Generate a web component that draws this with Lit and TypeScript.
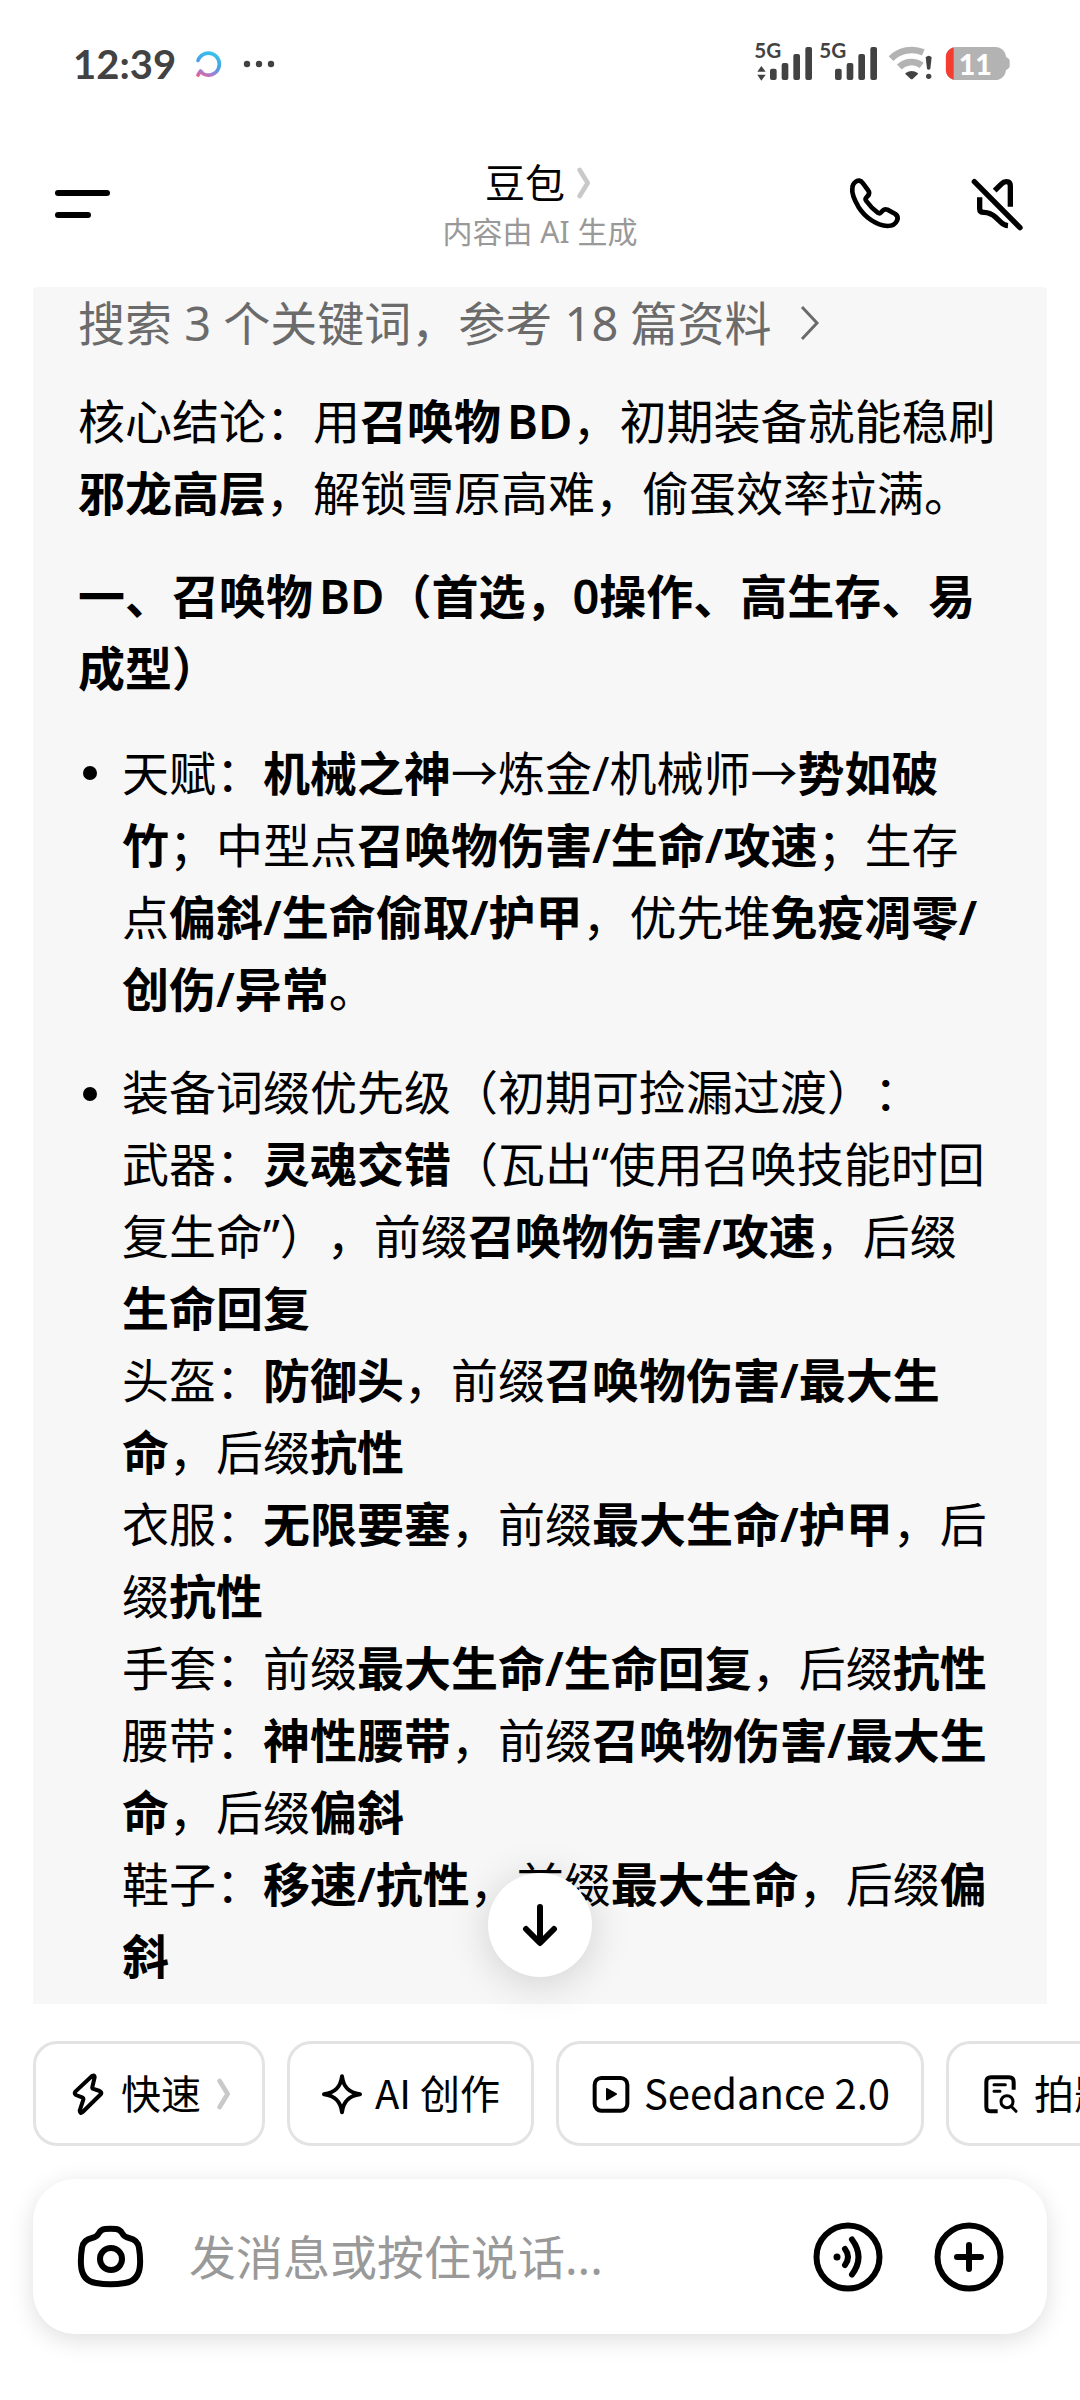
import { LitElement, html, css, svg } from "lit";
import { customElement } from "lit/decorators.js";

const signalBars = (x: number) => svg`
  <rect x=${x} y="116" width="20" height="34" rx="6" />
  <rect x=${x + 35} y="99" width="20" height="51" rx="6" />
  <rect x=${x + 70} y="72" width="20" height="78" rx="6" />
  <rect x=${x + 106} y="51" width="20" height="99" rx="6" />`;

@customElement("status-bar")
class StatusBar extends LitElement {
  static styles = css`
    :host {
      display: flex;
      align-items: center;
      height: 128px;
      padding: 0 69px 0 73px;
      color: #424242;
      font-family: Lato, "Noto Sans", sans-serif;
    }
    .time {
      font-size: 40px;
      line-height: 48px;
      font-weight: 700;
    }
    .app {
      margin-left: 17px;
    }
    .more {
      margin-left: 20px;
    }
    .signals {
      display: flex;
      gap: 6px;
      margin-left: auto;
    }
    .dark {
      fill: #424242;
    }
    .net {
      font-size: 62px;
      font-weight: 700;
    }
    .level {
      font-size: 86px;
      font-weight: 900;
      fill: #fff;
    }
  `;

  render() {
    return html`
      <span class="time">12:39</span>
      <svg class="app" width="30" height="30" viewBox="0 0 30 30" fill="none" aria-hidden="true">
        <defs>
          <linearGradient id="ring" x1="20" y1="0" x2="8" y2="30" gradientUnits="userSpaceOnUse">
            <stop offset="0.1" stop-color="#35c3ea" />
            <stop offset="0.5" stop-color="#4aa0e6" />
            <stop offset="0.75" stop-color="#a77fd0" />
            <stop offset="0.95" stop-color="#f0568f" />
          </linearGradient>
        </defs>
        <path d="M5 11.500A11 11 0 1 1 10.500 25L7.500 22L5 26" stroke="url(#ring)" stroke-width="3.600" stroke-linecap="round" stroke-linejoin="round" />
      </svg>
      <svg class="more dark" width="32" height="8" viewBox="0 0 32 8" aria-hidden="true">
        <circle cx="4" cy="4" r="3.200" /><circle cx="16" cy="4" r="3.200" /><circle cx="28" cy="4" r="3.200" />
      </svg>
      <div class="signals">
        <svg class="dark" width="59" height="64" viewBox="42 6 177 192">
          <text class="net" x="43" y="83">5G</text>
          ${signalBars(90)}
          <path d="M52 125L64 108L77 125ZM52 134H77L64 152Z" />
        </svg>
        <svg class="dark" width="59" height="64" viewBox="237 6 177 192">
          <text class="net" x="238" y="83">5G</text>
          ${signalBars(285)}
        </svg>
        <svg width="49" height="64" viewBox="432 6 147 192" fill="none" aria-hidden="true">
          <path d="M453 86A88 88 0 0 1 550 67M478 111A52 52 0 0 1 545 106" stroke="#b3b3b3" stroke-width="20" />
          <path class="dark" d="M497 129Q515 117 533 129Q535 131 533 133L518 147Q515 149 512 147L497 133Q495 131 497 129Z" />
          <path class="dark" d="M557 82Q566 72 575 82L571 116Q566 122 561 116Z" />
          <circle class="dark" cx="566" cy="139" r="8" />
        </svg>
        <svg width="72" height="64" viewBox="597 6 216 192">
          <clipPath id="cell"><rect x="617" y="51" width="181" height="99" rx="32" /></clipPath>
          <path d="M790 78Q809 84 809 92V109Q809 117 790 123Z" fill="#b3b3b3" />
          <g clip-path="url(#cell)">
            <rect x="617" y="51" width="181" height="99" fill="#b3b3b3" />
            <rect x="617" y="51" width="24" height="99" fill="#f43c30" />
          </g>
          <text class="level" x="706" y="134" text-anchor="middle">11</text>
        </svg>
      </div>
    `;
  }
}

const chevron = html`<svg width="18" height="32" viewBox="544 143 54 96" fill="none" aria-hidden="true">
  <path d="M564 152L588 191L564 230" stroke="#c9c9c9" stroke-width="14" stroke-linecap="round" stroke-linejoin="round" />
</svg>`;

@customElement("chat-header")
class ChatHeader extends LitElement {
  static styles = css`
    :host {
      display: grid;
      grid-template-columns: 1fr auto 1fr;
      align-items: center;
      height: 152px;
      padding: 0 54px;
    }
    button {
      display: flex;
      padding: 0;
      border: 0;
      background: none;
      font: inherit;
      color: #000;
      cursor: pointer;
    }
    .menu {
      justify-self: start;
    }
    .title {
      display: flex;
      flex-direction: column;
      align-items: center;
      gap: 7px;
    }
    .name {
      align-items: center;
      gap: 8px;
      padding-right: 4px;
      font-size: 40px;
      line-height: 48px;
    }
    .note {
      font-size: 30px;
      line-height: 36px;
      color: #999;
    }
    .actions {
      display: flex;
      justify-content: flex-end;
      gap: 66px;
    }
  `;

  render() {
    return html`
      <button class="menu" aria-label="菜单">
        <svg width="58" height="32" viewBox="0 0 58 32" fill="none" stroke="#000" stroke-width="6" stroke-linecap="round">
          <path d="M4 5H53M4 27H34" />
        </svg>
      </button>
      <div class="title">
        <button class="name">豆包 ${chevron}</button>
        <span class="note">内容由 AI 生成</span>
      </div>
      <div class="actions">
        <button aria-label="通话">
          <svg width="56" height="56" viewBox="23 18 168 168" fill="none" stroke="#000" stroke-width="14" stroke-linejoin="round">
            <path d="M45 36Q57 26 68 40L84 62Q90 70 82 78L77 84Q74 88 78 93Q92 113 112 128Q118 132 122 127L128 121Q133 116 141 119L165 132Q176 140 170 152Q163 168 142 168C108 166 74 142 54 110C40 86 34 68 36 54Q37 42 45 36Z" />
          </svg>
        </button>
        <button aria-label="静音">
          <svg width="56" height="56" viewBox="390 20 168 168" fill="none" stroke="#000" stroke-width="16" stroke-linejoin="round">
            <path d="M403 37L540 175" stroke-linecap="round" />
            <path d="M464 64L483 45Q494 34 505 38Q511 41 511 50V112" />
            <path d="M419 84V118Q419 129 432 129Q452 130 466 143L484 160Q492 168 504 169" />
          </svg>
        </button>
      </div>
    `;
  }
}

@customElement("chat-answer")
class ChatAnswer extends LitElement {
  static styles = css`
    :host {
      display: flex;
      flex-direction: column;
      gap: 31px;
      padding: 0 45px;
      overflow: hidden;
      border-radius: 4px 4px 0 0;
      background: #f7f7f7;
      font-size: 47px;
      line-height: 72px;
      color: #000;
    }
    .sources {
      display: flex;
      align-items: center;
      gap: 28px;
      margin-bottom: -5px;
      color: #6b6b6b;
      text-decoration: none;
    }
    p,
    h2,
    ul {
      margin: 0;
      padding: 0;
    }
    h2 {
      font-size: inherit;
    }
    h2,
    b {
      font-weight: 600;
    }
    .latin {
      margin-left: 6px;
    }
    .arrow {
      font-family: "Noto Sans CJK SC", sans-serif;
      font-weight: 400;
    }
    ul {
      display: flex;
      flex-direction: column;
      gap: 31px;
      list-style: none;
    }
    li {
      display: grid;
      grid-template-columns: 44px 1fr;
    }
    li::before {
      content: "";
      width: 14px;
      height: 14px;
      margin: 31px 0 0 5px;
      border-radius: 50%;
      background: #000;
    }
  `;

  render() {
    return html`
      <a class="sources" href="#sources">
        搜索 3 个关键词，参考 18 篇资料
        <svg width="20" height="36" viewBox="0 0 20 36" fill="none" aria-hidden="true">
          <path d="M2 2L17 18L2 34" stroke="#6b6b6b" stroke-width="3" />
        </svg>
      </a>
      <p>核心结论：用<b>召唤物<span class="latin">BD</span></b>，初期装备就能稳刷<b>邪龙高层</b>，解锁雪原高难，偷蛋效率拉满。</p>
      <h2>一、召唤物<span class="latin">BD</span>（首选，0操作、高生存、易成型）</h2>
      <ul>
        <li>
          <div>天赋：<b>机械之神</b><span class="arrow">→</span>炼金/机械师<span class="arrow">→</span><b>势如破竹</b>；中型点<b>召唤物伤害/生命/攻速</b>；生存点<b>偏斜/生命偷取/护甲</b>，优先堆<b>免疫凋零/创伤/异常</b>。</div>
        </li>
        <li>
          <div>
            装备词缀优先级（初期可捡漏过渡）：<br />
            武器：<b>灵魂交错</b>（瓦出“使用召唤技能时回复生命”），前缀<b>召唤物伤害/攻速</b>，后缀<b>生命回复</b><br />
            头盔：<b>防御头</b>，前缀<b>召唤物伤害/最大生命</b>，后缀<b>抗性</b><br />
            衣服：<b>无限要塞</b>，前缀<b>最大生命/护甲</b>，后缀<b>抗性</b><br />
            手套：前缀<b>最大生命/生命回复</b>，后缀<b>抗性</b><br />
            腰带：<b>神性腰带</b>，前缀<b>召唤物伤害/最大生命</b>，后缀<b>偏斜</b><br />
            鞋子：<b>移速/抗性</b>，前缀<b>最大生命</b>，后缀<b>偏斜</b>
          </div>
        </li>
      </ul>
    `;
  }
}

@customElement("quick-actions")
class QuickActions extends LitElement {
  static styles = css`
    :host {
      display: flex;
      gap: 22px;
      padding: 37px 0 33px 33px;
      overflow: hidden;
    }
    button {
      display: flex;
      flex: none;
      align-items: center;
      gap: 12px;
      height: 105px;
      padding: 0 31px;
      border: 3px solid #e3e3e3;
      border-radius: 24px;
      background: #fff;
      font-family: "Noto Sans CJK SC", sans-serif;
      font-size: 40px;
      color: #000;
      white-space: nowrap;
      cursor: pointer;
    }
    .label {
      padding-bottom: 4px;
    }
    .icon {
      fill: none;
      stroke: #000;
      stroke-width: 12px;
      stroke-linejoin: round;
      stroke-linecap: round;
    }
    .thin {
      stroke-width: 9px;
    }
    .solid {
      fill: #000;
      stroke-width: 6px;
    }
  `;

  render() {
    return html`
      <button>
        <svg class="icon" width="42" height="42" viewBox="111 128 126 126" aria-hidden="true">
          <path d="M186 137L136 184Q132 190 138 194L158 202Q161 204 160 208L149 241Q150 252 158 245L213 191Q216 185 209 182L188 175Q186 174 187 170L194 141Q194 132 186 137Z" />
        </svg>
        <span class="label">快速</span> ${chevron}
      </button>
      <button>
        <svg class="icon" width="42" height="42" viewBox="867 128 126 126" aria-hidden="true">
          <path d="M930 138C934 170 950 187 984 192C950 197 934 213 930 246C926 213 910 197 876 192C910 187 926 170 930 138Z" />
        </svg>
        <span class="label">AI 创作</span>
      </button>
      <button>
        <svg class="icon" width="42" height="42" viewBox="54 128 126 126" aria-hidden="true">
          <rect x="68" y="143" width="98" height="98" rx="20" />
          <path class="solid" d="M105 176L132 191L105 207Z" />
        </svg>
        <span class="label">Seedance 2.0</span>
      </button>
      <button>
        <svg class="icon" width="42" height="42" viewBox="1227 128 126 126" aria-hidden="true">
          <path d="M1280 243H1260Q1246 243 1246 229V155Q1246 141 1260 141H1314Q1328 141 1328 155V178" stroke-linecap="butt" />
          <path class="thin" d="M1269 163H1303M1269 183H1287M1322 229L1335 243" />
          <circle class="thin" cx="1308" cy="214" r="18" />
        </svg>
        <span class="label">拍题</span>
      </button>
    `;
  }
}

@customElement("chat-composer")
class ChatComposer extends LitElement {
  static styles = css`
    :host {
      display: flex;
      align-items: center;
      height: 155px;
      margin: 0 33px 66px;
      padding: 0 42px;
      box-sizing: border-box;
      border-radius: 42px;
      background: #fff;
      box-shadow: 0 6px 24px rgba(0, 0, 0, 0.13);
    }
    button {
      display: flex;
      flex: none;
      padding: 0;
      border: 0;
      background: none;
      cursor: pointer;
    }
    svg {
      fill: none;
      stroke: #000;
      stroke-width: 6px;
      stroke-linecap: round;
      stroke-linejoin: round;
    }
    .dot {
      fill: #000;
      stroke: none;
    }
    input {
      flex: 1;
      min-width: 0;
      margin: 0 42px;
      padding: 0;
      border: 0;
      outline: 0;
      background: none;
      font: inherit;
      font-size: 47px;
      line-height: 72px;
      color: #000;
    }
    input::placeholder {
      color: #999;
      opacity: 1;
    }
    .add {
      margin-left: 49px;
    }
  `;

  render() {
    return html`
      <button aria-label="拍照">
        <svg width="72" height="72" viewBox="0 0 72 72">
          <path d="M30 8Q35.500 7.500 41 8Q45 8.500 47 12Q49 16 54 17Q63 19 64 27Q65.500 36 65 44Q64 60 50 62Q35.500 64.500 21 62Q7 60 6 44Q5.500 36 7 27Q8 19 17 17Q22 16 24 12Q26 8.500 30 8Z" />
          <circle cx="36" cy="38" r="11" />
        </svg>
      </button>
      <input type="text" aria-label="消息" placeholder="发消息或按住说话..." />
      <button aria-label="语音">
        <svg width="72" height="72" viewBox="0 0 72 72">
          <circle cx="36" cy="36" r="31.500" />
          <circle class="dot" cx="25" cy="36" r="3.500" />
          <path d="M33 28Q39 36 33 44M40 18.500Q53 36 40 53.500" />
        </svg>
      </button>
      <button class="add" aria-label="更多">
        <svg width="72" height="72" viewBox="0 0 72 72">
          <circle cx="36" cy="36" r="31.500" />
          <path d="M24 36H48M36 24V48" />
        </svg>
      </button>
    `;
  }
}

@customElement("app-root")
class AppRoot extends LitElement {
  static styles = css`
    :host {
      display: flex;
      flex-direction: column;
      min-height: 100vh;
      background: #fff;
      font-family: "Noto Sans", "Noto Sans CJK SC", sans-serif;
      text-spacing-trim: space-all;
    }
    .conversation {
      position: relative;
      display: flex;
      flex: 1;
      margin: 7px 33px 0;
    }
    .answer {
      flex: 1;
      min-width: 0;
    }
    .latest {
      position: absolute;
      bottom: 27px;
      left: 50%;
      display: flex;
      align-items: center;
      justify-content: center;
      width: 104px;
      height: 104px;
      margin-left: -52px;
      padding: 0;
      border: 0;
      border-radius: 50%;
      background: #fff;
      box-shadow: 0 6px 42px rgba(0, 0, 0, 0.16);
      cursor: pointer;
    }
  `;

  render() {
    return html`
      <status-bar></status-bar>
      <chat-header lang="zh-CN"></chat-header>
      <main class="conversation">
        <chat-answer class="answer" lang="zh-CN"></chat-answer>
        <button class="latest" aria-label="回到底部">
          <svg width="44" height="44" viewBox="0 0 44 44" fill="none" stroke="#000" stroke-width="6" stroke-linecap="round" stroke-linejoin="round">
            <path d="M22 4V39M8 26L22 40L36 26" />
          </svg>
        </button>
      </main>
      <quick-actions lang="zh-CN"></quick-actions>
      <chat-composer lang="zh-CN"></chat-composer>
    `;
  }
}
